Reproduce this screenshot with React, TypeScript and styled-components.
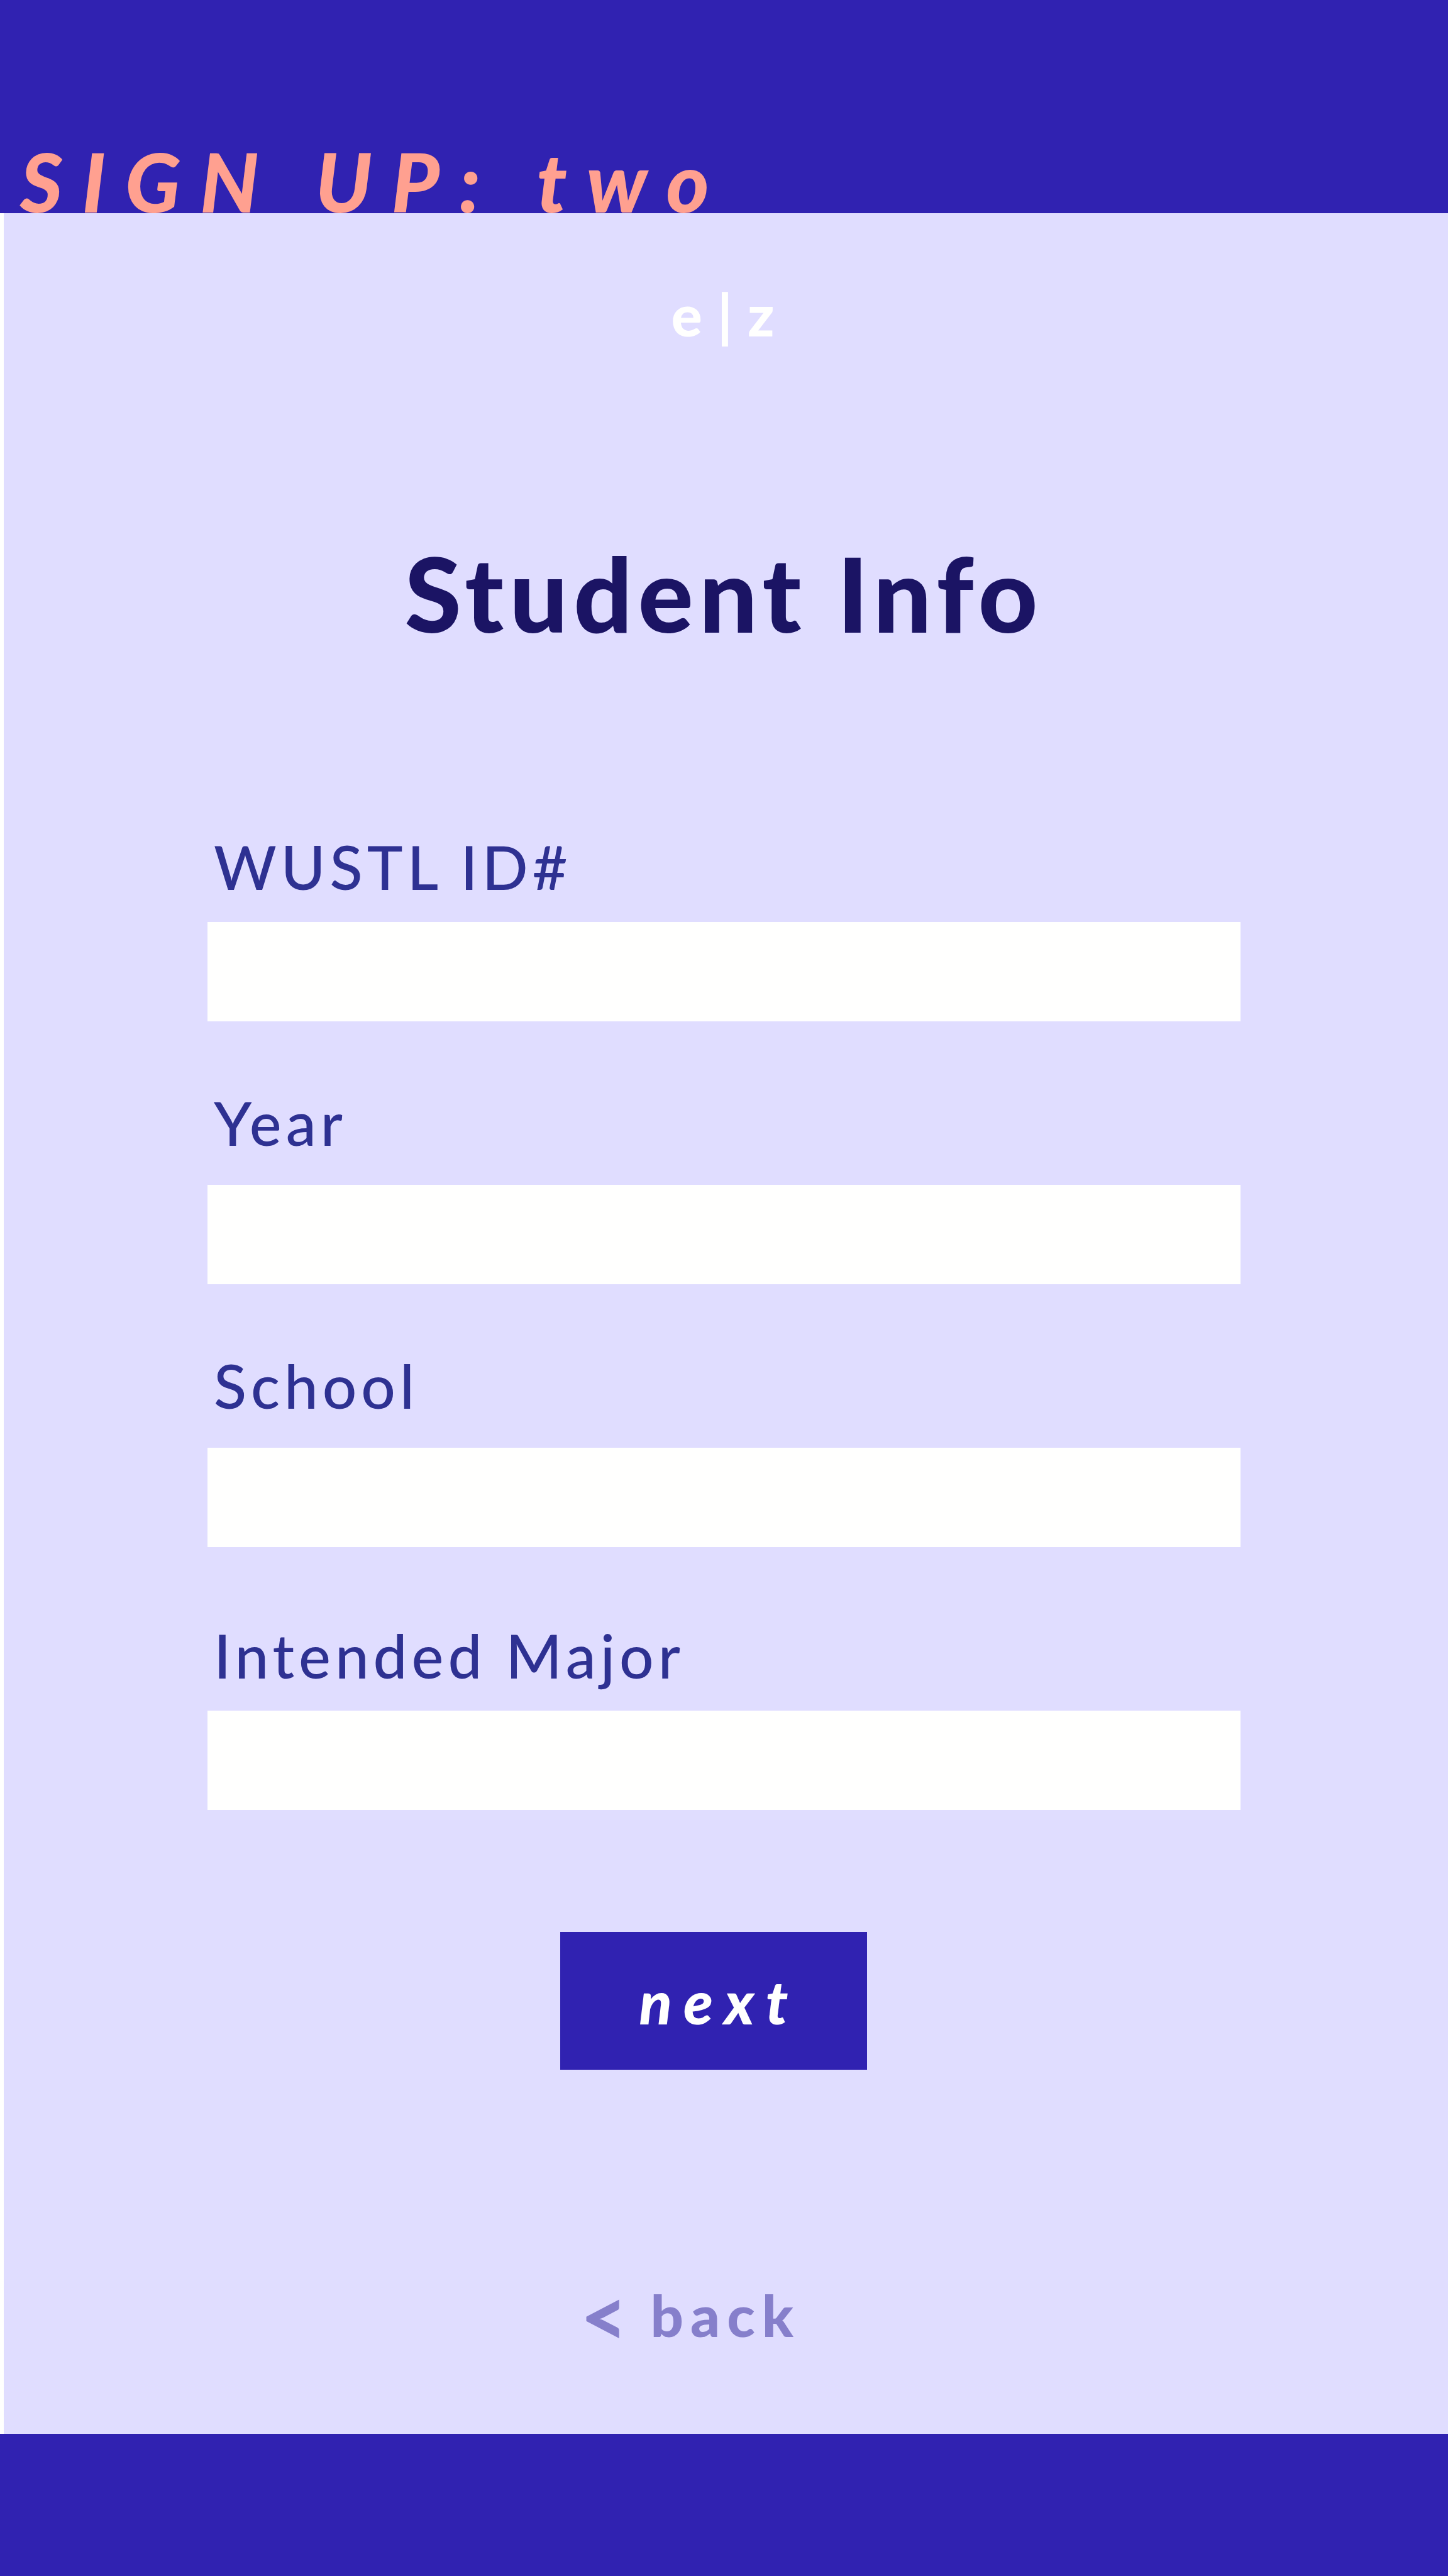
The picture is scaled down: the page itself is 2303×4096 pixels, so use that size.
import React from "react";
import styled, { createGlobalStyle } from "styled-components";

const color = {
  blue: "#3022b1",
  lavender: "#e0ddff",
  peach: "#ffa090",
  navy: "#1b1464",
  indigo: "#2e3192",
  muted: "#867fcb",
  white: "#fffffe",
};

const GlobalStyle = createGlobalStyle`
  *, *::before, *::after { box-sizing: border-box; }
  body {
    margin: 0;
    background: ${color.lavender};
    font-family: Lato, "Liberation Sans", sans-serif;
  }
`;

const Page = styled.div`
  display: flex;
  flex-direction: column;
  min-height: 100vh;
`;

const Header = styled.header`
  display: flex;
  align-items: flex-end;
  height: 339px;
  padding: 0 32px;
  background: ${color.blue};
`;

const Step = styled.h1`
  margin: 0;
  color: ${color.peach};
  font-size: 130px;
  font-style: italic;
  font-weight: 900;
  line-height: 102px;
  letter-spacing: 31px;
`;

const Content = styled.main`
  display: flex;
  flex: 1;
  flex-direction: column;
  align-items: center;
  padding-top: 106px;
  background: ${color.lavender};
  box-shadow: inset 6px 0 ${color.white};
`;

const Logo = styled.div`
  padding-left: 20px;
  color: ${color.white};
  font-size: 92px;
  font-weight: 900;
  line-height: 110px;
  letter-spacing: 24px;
`;

const Title = styled.h2`
  margin: 290px 0 0;
  color: ${color.navy};
  font-size: 164px;
  font-weight: 900;
  line-height: 196px;
  letter-spacing: 9px;
`;

const Form = styled.form`
  display: flex;
  flex-direction: column;
  align-items: center;
  width: 100%;
  margin-top: 268px;
`;

const Fields = styled.div`
  display: flex;
  flex-direction: column;
  gap: 103px;
  width: 100%;
  padding: 0 330px;
`;

const Field = styled.div`
  display: flex;
  flex-direction: column;
  justify-content: flex-end;
  min-height: 315px;
`;

const Label = styled.label<{ $tight?: boolean }>`
  padding: 0 10px ${(p) => (p.$tight ? 30 : 41)}px;
  color: ${color.indigo};
  font-size: 96px;
  font-weight: 500;
  line-height: 116px;
  letter-spacing: 7px;
`;

const Input = styled.input`
  width: 100%;
  height: 158px;
  padding: 0 32px;
  border: 0;
  border-radius: 0;
  background: ${color.white};
  color: ${color.indigo};
  font: 500 92px/110px Lato, "Liberation Sans", sans-serif;
`;

const Actions = styled.div`
  display: flex;
  flex-direction: column;
  align-items: center;
  gap: 335px;
  margin-top: 194px;
  padding-right: 33px;
`;

const NextButton = styled.button`
  width: 488px;
  height: 219px;
  padding: 0 0 0 18px;
  border: 0;
  background: ${color.blue};
  color: ${color.white};
  font: italic 900 96px/116px Lato, "Liberation Sans", sans-serif;
  letter-spacing: 18px;
  cursor: pointer;
`;

const BackLink = styled.a`
  display: flex;
  align-items: center;
  gap: 36px;
  margin-right: 74px;
  color: ${color.muted};
  font-size: 92px;
  font-weight: 900;
  line-height: 110px;
  letter-spacing: 11px;
  text-decoration: none;
`;

const BackMark = styled.span`
  font-size: 130px;
  letter-spacing: normal;
`;

const Footer = styled.footer`
  height: 226px;
  background: ${color.blue};
`;

const fields = [
  { id: "wustl-id", label: "WUSTL ID#", tight: true },
  { id: "year", label: "Year", tight: false },
  { id: "school", label: "School", tight: false },
  { id: "major", label: "Intended Major", tight: true },
];

export default function App() {
  return (
    <>
      <GlobalStyle />
      <Page>
        <Header>
          <Step>SIGN UP: two</Step>
        </Header>
        <Content>
          <Logo>e|z</Logo>
          <Title>Student Info</Title>
          <Form onSubmit={(event) => event.preventDefault()}>
            <Fields>
              {fields.map((field) => (
                <Field key={field.id}>
                  <Label htmlFor={field.id} $tight={field.tight}>
                    {field.label}
                  </Label>
                  <Input id={field.id} name={field.id} type="text" />
                </Field>
              ))}
            </Fields>
            <Actions>
              <NextButton type="submit">next</NextButton>
              <BackLink href="#back">
                <BackMark>&lt;</BackMark>
                <span>back</span>
              </BackLink>
            </Actions>
          </Form>
        </Content>
        <Footer />
      </Page>
    </>
  );
}
